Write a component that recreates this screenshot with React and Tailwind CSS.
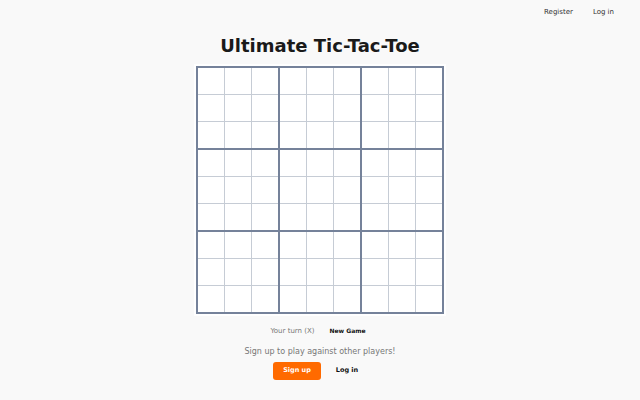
import React, { useState } from "react";

const FONT = { fontFamily: '"DejaVu Sans", Verdana, sans-serif' };

function SmallBoard({ cells, onPlay }) {
  return (
    <div className="grid grid-cols-3 gap-px bg-[#c6ccd5]">
      {cells.map((value, i) => (
        <button
          key={i}
          onClick={() => onPlay(i)}
          className="w-[26px] h-[26px] bg-white flex items-center justify-center text-[14px] font-bold text-gray-700"
        >
          {value}
        </button>
      ))}
    </div>
  );
}

export default function App() {
  const [boards, setBoards] = useState(Array.from({ length: 9 }, () => Array(9).fill("")));
  const [turn, setTurn] = useState("X");

  const handlePlay = (b, c) => {
    if (boards[b][c]) return;
    const next = boards.map((cells, i) => (i === b ? cells.map((v, j) => (j === c ? turn : v)) : cells));
    setBoards(next);
    setTurn(turn === "X" ? "O" : "X");
  };

  const newGame = () => {
    setBoards(Array.from({ length: 9 }, () => Array(9).fill("")));
    setTurn("X");
  };

  return (
    <div className="w-full min-h-[400px] bg-[#f9f9f9] text-[#1c1c1c]" style={FONT}>
      {/* Nav */}
      <header className="h-6 flex items-center justify-end gap-5 pr-[26px] text-[7px] text-[#333]">
        <a href="#">Register</a>
        <a href="#">Log in</a>
      </header>

      <main className="flex flex-col items-center">
        <h1 className="mt-3 text-[18px] leading-5 font-bold text-[#1a1a1a]">Ultimate Tic-Tac-Toe</h1>

        {/* Board */}
        <div className="mt-2 bg-white p-0.5">
          <div className="border-2 border-[#75829a] bg-[#75829a] grid grid-cols-3 gap-[2px]">
            {boards.map((cells, b) => (
              <SmallBoard key={b} cells={cells} onPlay={(c) => handlePlay(b, c)} />
            ))}
          </div>
        </div>

        <div className="mt-[10px] flex items-center gap-[15px] pr-[4px] leading-[10px] text-[7px]">
          <span className="text-[#777]">Your turn ({turn})</span>
          <button onClick={newGame} className="font-bold text-[6px] text-[#111]">
            New Game
          </button>
        </div>

        <p className="mt-[10px] text-[8px] leading-3 text-[#777]">Sign up to play against other players!</p>

        <div className="mt-1 flex items-center gap-0.5 pl-[4px]">
          <button className="w-12 h-[18px] rounded-[3px] bg-[#ff6a00] text-white text-[6.5px] font-bold">Sign up</button>
          <button className="w-12 h-[18px] text-[6.5px] font-bold text-[#111]">Log in</button>
        </div>
      </main>
    </div>
  );
}
